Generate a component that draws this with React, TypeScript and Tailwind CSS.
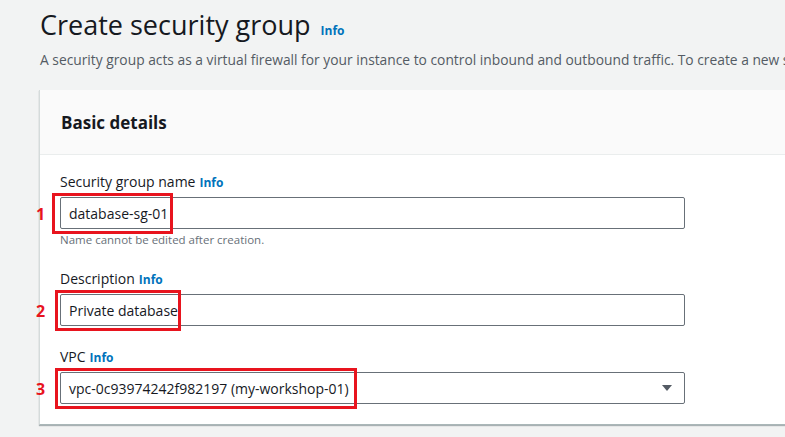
import React from "react";

const font = { fontFamily: '"Open Sans", "Noto Sans", Arial, sans-serif' };

function Info() {
  return <span className="ml-[4px] text-[12px] font-bold text-[#0073bb]">Info</span>;
}

function Field({
  label,
  value,
  num,
  boxW,
  select,
  hint,
}: {
  label: string;
  value: string;
  num: string;
  boxW: number;
  select?: boolean;
  hint?: string;
}) {
  return (
    <div className="flex flex-col">
      <div className="h-[22px] text-[14px] leading-[22px] text-[#16191f]">
        {label}
        <Info />
      </div>
      <div className="relative mt-[4px] w-[625px]">
        <div className="flex h-[32px] items-center justify-between rounded-[2px] border border-[#687078] bg-white pl-[8px] pr-[11px] text-[14px] text-[#16191f]">
          <span>{value}</span>
          {select && (
            <svg width="12" height="8" viewBox="0 0 12 8">
              <path d="M1 1 L11 1 L6 7 Z" fill="#545b64" />
            </svg>
          )}
        </div>
        <div
          className="pointer-events-none absolute top-[-4px] h-[41px] border-[3px] border-[#e8141e]"
          style={{ left: num === "1" ? -8 : -5, width: boxW }}
        />
        <div className="absolute top-[5px] left-[-24px] text-[16px] font-bold text-[#e8141e]">{num}</div>
      </div>
      {hint && <div className="mt-[3px] h-[16px] text-[11.5px] leading-[16px] text-[#687078]">{hint}</div>}
    </div>
  );
}

export default function App() {
  return (
    <div className="h-[437px] w-full overflow-hidden bg-[#f2f3f3]" style={font}>
      <div className="pl-[40px] pt-[7px]">
        <div className="flex items-baseline">
          <h1 className="text-[27px] leading-[36px] font-normal text-[#16191f]">Create security group</h1>
          <span className="ml-[10px] text-[12px] font-bold text-[#0073bb]">Info</span>
        </div>
        <p className="mt-[7px] whitespace-nowrap text-[13.8px] leading-[20px] text-[#545b64]">
          A security group acts as a virtual firewall for your instance to control inbound and outbound traffic. To create a new security group, complete the fields below.
        </p>
      </div>
      <div className="mt-[20px] ml-[39px] w-[800px] border-l border-l-[#d5dbdb] border-b border-b-[#aab7b8] bg-white shadow-[0_1px_1px_0_rgba(0,28,36,0.3)]">
        <div className="flex h-[65px] items-center border-b border-[#eaeded] bg-[#fafafa] pl-[21px] pt-[1px]">
          <h2 className="text-[17px] font-bold text-[#16191f]">Basic details</h2>
        </div>
        <div className="flex flex-col gap-[20px] pl-[20px] pt-[16px] pb-[20px]">
          <Field
            label="Security group name"
            value="database-sg-01"
            num="1"
            boxW={121}
            hint="Name cannot be edited after creation."
          />
          <Field label="Description" value="Private database" num="2" boxW={126} />
          <Field label="VPC" value="vpc-0c93974242f982197 (my-workshop-01)" num="3" boxW={302} select />
        </div>
      </div>
    </div>
  );
}
